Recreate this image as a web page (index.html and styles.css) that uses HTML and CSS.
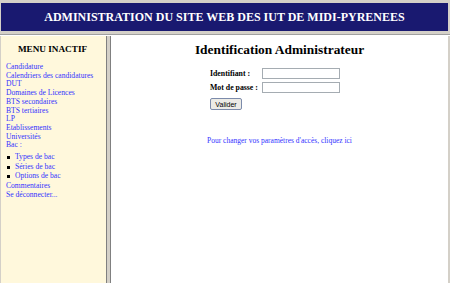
FILE: index.html
```html
<!DOCTYPE html>
<html lang="fr">

<head>
  <meta charset="UTF-8">
  <title>Administration IUT Midi-Pyrenees</title>
  <link rel="stylesheet" href="styles.css">
</head>

<body>
  <header class="top">
    <h1>ADMINISTRATION DU SITE WEB DES IUT DE MIDI-PYRENEES</h1>
  </header>
  <div class="frames">
    <nav class="menu">
      <h2>MENU INACTIF</h2>
      <a href="#">Candidature</a>
      <a href="#">Calendriers des candidatures</a>
      <a href="#">DUT</a>
      <a href="#">Domaines de Licences</a>
      <a href="#">BTS secondaires</a>
      <a href="#">BTS tertiaires</a>
      <a href="#">LP</a>
      <a href="#">Etablissements</a>
      <a href="#">Universités</a>
      <span class="sub">Bac :</span>
      <ul>
        <li><a href="#">Types de bac</a></li>
        <li><a href="#">Séries de bac</a></li>
        <li><a href="#">Options de bac</a></li>
      </ul>
      <a href="#">Commentaires</a>
      <a href="#">Se déconnecter...</a>
    </nav>
    <main class="content">
      <h2>Identification Administrateur</h2>
      <form class="login">
        <label for="ident">Identifiant :</label>
        <input type="text" id="ident">
        <label for="pass">Mot de passe :</label>
        <input type="password" id="pass">
        <button type="button">Valider</button>
      </form>
      <p class="change"><a href="#">Pour changer vos paramètres d'accès, cliquez ici</a></p>
    </main>
  </div>
</body>

</html>
```
FILE: styles.css
```css
* {
  margin: 0;
  padding: 0;
  box-sizing: border-box;
}

html,
body {
  height: 100%;
}

body {
  font-family: "Liberation Serif", "Times New Roman", serif;
  background: #d4d0c8;
  display: flex;
  flex-direction: column;
  overflow: hidden;
}

.top {
  height: 35px;
  padding: 3px 2px 3px 1px;
  border-bottom: 1px solid #a0a0a0;
}

.top h1 {
  height: 100%;
  background: #191970;
  color: #fff;
  font-size: 12px;
  font-weight: bold;
  text-align: center;
  line-height: 28px;
}

.frames {
  flex: 1;
  display: grid;
  grid-template-columns: 106px 1fr;
  gap: 3px;
  padding: 0 2px 0 1px;
  border-top: 1px solid #fff;
}

.menu {
  background: #fff8dc;
  display: flex;
  flex-direction: column;
  padding: 6px 0 0 5px;
  font-size: 7.6px;
  line-height: 8.7px;
  border-right: 1px solid #808080;
}

.menu h2 {
  font-size: 9.2px;
  text-align: center;
  margin: 1px 0 8px;
  line-height: 12px;
  padding-right: 7px;
}

.menu a,
.menu .sub {
  color: #3333ff;
  text-decoration: none;
}

.menu ul {
  list-style: none;
  margin: 2px 0 1px;
}

.menu li {
  line-height: 9.6px;
  padding-left: 9px;
  position: relative;
}

.menu li::before {
  content: "";
  position: absolute;
  left: 1px;
  top: 4px;
  width: 3px;
  height: 3px;
  background: #000;
}

.content {
  background: #fff;
  border-left: 1px solid #808080;
  text-align: center;
}

.content h2 {
  font-size: 13.4px;
  margin-top: 6px;
  line-height: 16px;
}

.login {
  display: grid;
  grid-template-columns: 51px 78px;
  column-gap: 1px;
  row-gap: 3px;
  align-items: center;
  width: 130px;
  margin: 10px 0 0 99px;
  text-align: left;
}

.login label {
  font-size: 7.8px;
  font-weight: bold;
  white-space: nowrap;
}

.login input {
  height: 11px;
  border: 1px solid #a5acb2;
  background: #fff;
}

.login button {
  grid-column: 1;
  justify-self: start;
  width: 32px;
  height: 12px;
  margin-top: 2px;
  font-family: "Liberation Sans", Arial, sans-serif;
  font-size: 7px;
  background: #ecebe6;
  border: 1px solid #7c8bab;
  border-radius: 2px;
}

.change {
  margin-top: 26px;
  font-size: 7.5px;
}

.change a {
  color: #3333ff;
  text-decoration: none;
}
```
